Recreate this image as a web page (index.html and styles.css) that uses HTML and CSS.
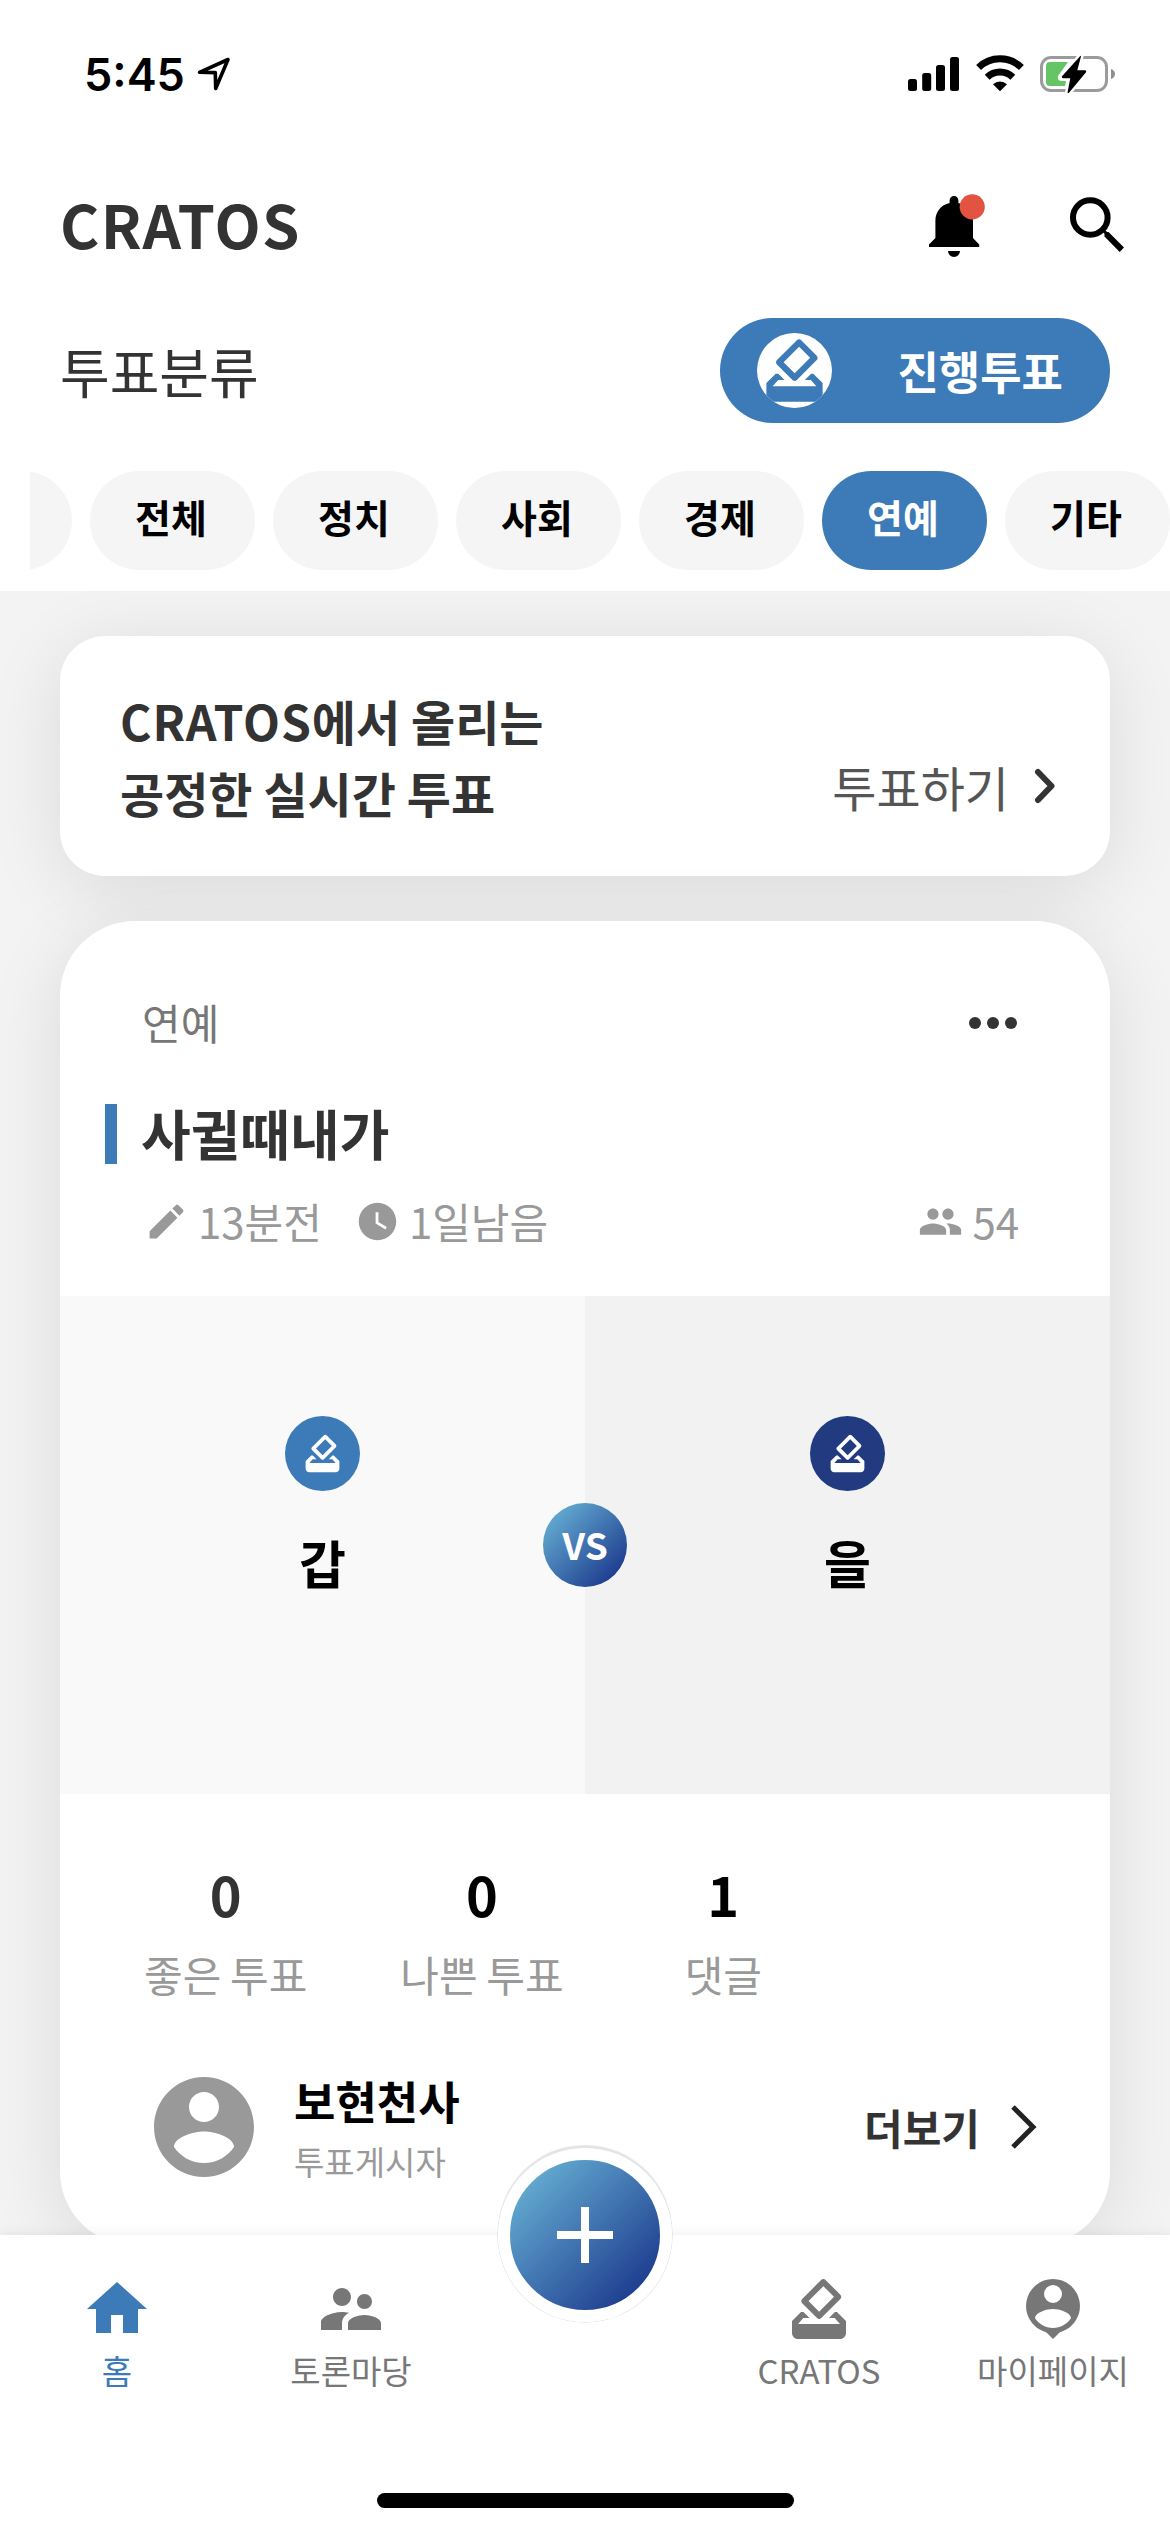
FILE: index.html
```html
<!DOCTYPE html>
<html lang="ko">
<head>
<meta charset="utf-8">
<title>CRATOS</title>
<link rel="stylesheet" href="styles.css">
</head>
<body>
<svg class="defs" width="0" height="0" aria-hidden="true">
  <symbol id="vote" viewBox="0 0 24 24"><path d="M18 13h-.68l-2 2h1.91L19 17H5l1.78-2h2.05l-2-2H6l-3 3v4c0 1.1.89 2 1.99 2H19c1.1 0 2-.89 2-2v-4l-3-3zm-1-5.05l-4.95 4.95-3.54-3.54 4.95-4.95L17 7.95zm-4.24-5.66L6.39 8.66c-.39.39-.39 1.02 0 1.41l4.95 4.95c.39.39 1.02.39 1.41 0l6.36-6.36c.39-.39.39-1.02 0-1.41L14.16 2.3c-.38-.4-1.01-.4-1.4-.01z"/></symbol>
</svg>
<div class="app">
  <header class="top">
    <div class="status">
      <div class="status-left">
        <span class="time">5:45</span>
        <svg width="34" height="34" viewBox="0 0 34 34"><path d="M2.5 15.3 31 2.5 18.7 31.5 18.3 15.6Z" fill="none" stroke="#000" stroke-width="3.6" stroke-linejoin="round"/></svg>
      </div>
      <div class="status-right">
        <svg width="52" height="37" viewBox="0 0 52 37"><rect x="0" y="24" width="9" height="12" rx="2.5"/><rect x="14.2" y="18" width="9" height="18" rx="2.5"/><rect x="28" y="10" width="9" height="26" rx="2.5"/><rect x="42" y="2" width="9" height="34" rx="2.5"/></svg>
        <svg width="48" height="37" viewBox="0 0 48 37"><path d="M2.6 12.6A30.5 30.5 0 0 1 45.4 12.6M11.2 22.2A18.4 18.4 0 0 1 36.8 22.2" fill="none" stroke="#000" stroke-width="7"/><path d="M24 36.3 17 29.3a10.2 10.2 0 0 1 14 0Z"/></svg>
        <svg width="76" height="38" viewBox="0 0 76 38"><rect x="1.5" y="2.5" width="65" height="33" rx="9.5" fill="none" stroke="#9b9b9b" stroke-width="3"/><path d="M71 14c2.600.8 4 2.700 4 5s-1.400 4.200-4 5Z" fill="#8f8f8f"/><path d="M10 7H28L18 21q-1 5 4 5h4L25 31H10q-4 0-4-4V11q0-4 4-4Z" fill="#65c466"/><path d="M40.500.8 22 21.300q-.5 1.700 1 1.900h7.300L27.500 37.500q.8 1 1.700 0L46 17.200q.6-1.700-1-1.900H37.300L41 1.500q-.2-.8-.5-.7Z" stroke="#fff" stroke-width="5" paint-order="stroke"/></svg>
      </div>
    </div>
    <div class="header">
      <h1>CRATOS</h1>
      <div class="header-icons">
        <svg width="56" height="65" viewBox="0 0 56 65"><path d="M25 2a4.400 4.400 0 0 1 4.400 4.400V9C38 11 44 17.500 44 27V44l6.200 6.600V53H0v-2.400L6.400 44V27C6.400 17.500 12 11 20.600 9V6.400A4.400 4.400 0 0 1 25 2ZM19 57H31a6 6 0 0 1-12 0Z"/><circle cx="43.200" cy="12.800" r="12.600" fill="#e25341"/></svg>
        <svg class="search" width="54" height="55" viewBox="0 0 54 55"><circle cx="20.300" cy="20.500" r="17.300" fill="none" stroke="#000" stroke-width="6"/><path d="M34.500 35h4L54 50.600 49.700 55 34.500 39.500Z"/><path d="M32 32 37 37" stroke="#000" stroke-width="3"/></svg>
      </div>
    </div>
    <div class="filter">
      <h2>투표분류</h2>
      <button class="ongoing"><span class="ongoing-badge"><svg width="75" height="75"><use href="#vote"/></svg></span><span>진행투표</span></button>
    </div>
    <nav class="chips">
      <span class="chip"></span><span class="chip">전체</span><span class="chip">정치</span><span class="chip">사회</span><span class="chip">경제</span><span class="chip active">연예</span><span class="chip">기타</span>
    </nav>
  </header>

  <main class="feed">
    <section class="banner">
      <p><span class="brand">CRATOS</span>에서 올리는<br>공정한 실시간 투표</p>
      <a class="banner-link">투표하기<svg width="22" height="36" viewBox="0 0 22 36"><path d="M4 4 17.500 18 4 32" fill="none" stroke="#333" stroke-width="6" stroke-linecap="round" stroke-linejoin="round"/></svg></a>
    </section>

    <article class="card">
      <div class="category"><span>연예</span><svg width="48" height="12" viewBox="0 0 48 12"><circle cx="6" cy="6" r="6"/><circle cx="24" cy="6" r="6"/><circle cx="42" cy="6" r="6"/></svg></div>
      <h3>사귈때내가</h3>
      <div class="meta">
        <span class="meta-item"><svg viewBox="0 0 24 24"><path d="M3 17.250V21h3.750L17.810 9.940l-3.750-3.750L3 17.250zM20.710 7.040c.39-.39.39-1.020 0-1.410l-2.340-2.340c-.39-.39-1.020-.39-1.410 0l-1.830 1.830 3.750 3.750 1.830-1.830z"/></svg>13분전</span>
        <span class="meta-item"><svg viewBox="0 0 24 24"><path d="M12 2C6.500 2 2 6.500 2 12s4.500 10 10 10 10-4.500 10-10S17.500 2 12 2zm4.200 14.200L11 13V7h1.500v5.200l4.500 2.700-.8 1.300z"/></svg>1일남음</span>
        <span class="meta-item voters"><svg viewBox="0 0 24 24"><path d="M16 11c1.660 0 2.990-1.340 2.990-3S17.660 5 16 5c-1.660 0-3 1.340-3 3s1.340 3 3 3zm-8 0c1.660 0 2.990-1.340 2.990-3S9.660 5 8 5C6.340 5 5 6.340 5 8s1.340 3 3 3zm0 2c-2.330 0-7 1.170-7 3.500V19h14v-2.500c0-2.330-4.670-3.500-7-3.500zm8 0c-.29 0-.62.02-.97.05 1.160.84 1.970 1.970 1.970 3.450V19h6v-2.500c0-2.330-4.670-3.500-7-3.500z"/></svg>54</span>
      </div>
      <div class="versus">
        <div class="side side-a"><span class="side-icon"><svg width="45" height="45"><use href="#vote"/></svg></span><b>갑</b></div>
        <div class="side side-b"><span class="side-icon"><svg width="45" height="45"><use href="#vote"/></svg></span><b>을</b></div>
        <span class="vs">VS</span>
      </div>
      <div class="stats">
        <div class="stat first"><b>0</b><span>좋은 투표</span></div>
        <div class="stat"><b>0</b><span>나쁜 투표</span></div>
        <div class="stat comments"><b>1</b><span>댓글</span></div>
      </div>
      <div class="author">
        <svg width="120" height="120" viewBox="0 0 24 24" fill="#999"><path d="M12 2C6.480 2 2 6.480 2 12s4.480 10 10 10 10-4.480 10-10S17.520 2 12 2zm0 3c1.660 0 3 1.340 3 3s-1.340 3-3 3-3-1.340-3-3 1.340-3 3-3zm0 14.200c-2.500 0-4.710-1.280-6-3.220.03-1.990 4-3.080 6-3.080 1.990 0 5.970 1.090 6 3.080-1.290 1.940-3.500 3.220-6 3.220z"/></svg>
        <div class="author-text"><b>보현천사</b><span>투표게시자</span></div>
        <a class="more">더보기<svg width="27" height="46" viewBox="0 0 27 46"><path d="M3 3 23 23 3 43" fill="none" stroke="#222" stroke-width="5"/></svg></a>
      </div>
    </article>
  </main>

  <nav class="tabs">
    <a class="tab active"><svg viewBox="0 0 24 24"><path d="M10 20v-6h4v6h5v-8h3L12 3 2 12h3v8z"/></svg>홈</a>
    <a class="tab"><svg viewBox="0 0 24 24"><path d="M16.500 12c1.380 0 2.490-1.120 2.490-2.500S17.880 7 16.500 7C15.120 7 14 8.120 14 9.500s1.120 2.500 2.500 2.500zM9 11c1.660 0 2.990-1.340 2.990-3S10.660 5 9 5C7.340 5 6 6.340 6 8s1.340 3 3 3zm7.500 3c-1.830 0-5.500.92-5.500 2.750V19h11v-2.250c0-1.830-3.670-2.750-5.500-2.750zM9 13c-2.330 0-7 1.170-7 3.500V19h7v-2.250c0-.85.33-2.340 2.370-3.470C10.500 13.100 9.660 13 9 13z"/></svg>토론마당</a>
    <span class="tab"></span>
    <a class="tab"><svg><use href="#vote"/></svg>CRATOS</a>
    <a class="tab"><svg viewBox="0 0 24 24"><path fill-rule="evenodd" d="M12 2a9 9 0 0 1 3.200 17.400q-.8.200-1.200.6L12 22 10 20q-.4-.4-1.200-.6A9 9 0 0 1 12 2zm0 2a3 3 0 1 0 0 6 3 3 0 0 0 0-6zm0 14.300c2.500 0 4.710-1.280 6-3.220-.03-1.990-4-3.080-6-3.080s-5.970 1.090-6 3.080c1.290 1.940 3.500 3.220 6 3.220z"/></svg>마이페이지</a>
    <button class="add"><svg width="96" height="96" viewBox="0 0 24 24" fill="#fff"><path d="M19 13h-6v6h-2v-6H5v-2h6V5h2v6h6v2z"/></svg></button>
    <span class="home-indicator"></span>
  </nav>
</div>
</body>
</html>
```
FILE: styles.css
```css
* { box-sizing: border-box; margin: 0; padding: 0; }
body {
  width: 1170px;
  height: 2532px;
  overflow: hidden;
  background: #fff;
  color: #333;
  font-family: "Noto Sans CJK KR", "Noto Sans", sans-serif;
}
svg { display: block; flex: none; }
button { border: 0; font: inherit; }
.defs { position: absolute; }
.app { display: flex; flex-direction: column; height: 2532px; }

/* Top area */
.top { position: relative; z-index: 1; flex: none; height: 591px; background: #fff; }
.status {
  display: flex;
  justify-content: space-between;
  height: 132px;
  padding: 55px 54px 0 84px;
}
.status-left { display: flex; gap: 11px; }
.status-left svg { margin-top: 2px; }
.time { width: 102px; font: 600 45px/40px Inter, sans-serif; color: #000; white-space: nowrap; }
.status-right { display: flex; gap: 16px; }
.header {
  display: flex;
  justify-content: space-between;
  height: 180px;
  padding: 0 46px 0 60px;
}
.header h1 { font-size: 60px; line-height: 182px; font-weight: 700; letter-spacing: 1.3px; }
.header-icons { display: flex; align-items: flex-start; gap: 85px; padding-top: 62px; }
.search { margin-top: 3px; }
.filter {
  display: flex;
  justify-content: space-between;
  align-items: center;
  height: 105px;
  margin: 6px 60px 48px;
}
.filter h2 { font-size: 54px; font-weight: 400; line-height: 105px; }
.ongoing {
  display: flex;
  align-items: center;
  justify-content: space-between;
  width: 390px;
  height: 105px;
  padding: 0 47px 0 37px;
  border-radius: 53px;
  background: #3c7ab8;
  color: #fff;
  font-size: 45px;
  font-weight: 700;
}
.ongoing-badge { width: 75px; height: 75px; border-radius: 50%; background: #fff; overflow: hidden; }
.ongoing-badge svg { fill: #3c7ab8; }
.chips { display: flex; justify-content: flex-end; gap: 18px; margin-left: 30px; overflow: hidden; }
.chip {
  flex: none;
  width: 165px;
  height: 99px;
  padding-right: 3px;
  border-radius: 50px;
  background: #f5f5f5;
  color: #000;
  font-size: 39px;
  font-weight: 700;
  line-height: 91px;
  text-align: center;
}
.chip.active { background: #3c7ab8; color: #fff; }

/* Feed */
.feed { flex: none; height: 1644px; padding: 45px 60px 0; background: #f3f3f3; overflow: hidden; }
.banner {
  display: flex;
  justify-content: space-between;
  align-items: flex-end;
  height: 240px;
  padding: 0 54px 48px 60px;
  border-radius: 45px;
  background: #fff;
  box-shadow: 0 12px 75px rgba(0, 0, 0, 0.1);
}
.banner p { font-size: 48px; line-height: 72px; font-weight: 700; word-spacing: -2.5px; }
.brand { letter-spacing: 0.9px; }
.banner-link { display: flex; align-items: center; gap: 25px; margin-bottom: 6px; color: #555; font-size: 48px; line-height: 72px; }
.card {
  height: 1325px;
  margin-top: 45px;
  padding-top: 72px;
  border-radius: 75px;
  background: #fff;
  box-shadow: 0 12px 75px rgba(0, 0, 0, 0.1);
}
.category {
  display: flex;
  justify-content: space-between;
  align-items: center;
  height: 57px;
  padding: 0 93px 0 82px;
  color: #777;
  font-size: 42px;
}
.category svg { margin-top: 3px; fill: #333; }
.card h3 {
  height: 60px;
  margin: 54px 0 30px 45px;
  padding-left: 24px;
  border-left: 12px solid #3c7ab8;
  font-size: 54px;
  line-height: 57px;
}
.meta { display: flex; gap: 33px; height: 54px; padding: 0 91px 0 84px; color: #999; font-size: 42px; line-height: 54px; }
.meta-item { display: flex; align-items: center; gap: 9px; }
.meta-item svg { width: 45px; height: 45px; fill: #999; }
.voters { margin-left: auto; }
.versus { position: relative; display: flex; height: 498px; margin-top: 48px; }
.side { display: flex; flex: 1; flex-direction: column; align-items: center; gap: 41px; padding-top: 120px; color: #000; font-size: 51px; line-height: 60px; }
.side-a { background: #f9f9f9; }
.side-b { background: #f2f2f2; }
.side-icon { display: grid; place-items: center; width: 75px; height: 75px; border-radius: 50%; background: #3c7ab8; }
.side-b .side-icon { background: #213a80; }
.side-icon svg { fill: #fff; }
.vs {
  position: absolute;
  left: 483px;
  top: 207px;
  width: 84px;
  height: 84px;
  border-radius: 50%;
  background: linear-gradient(135deg, #6ebcdb, #122a84);
  color: #fff;
  font-size: 37px;
  font-weight: 700;
  line-height: 82px;
  text-align: center;
}
.stats { display: flex; gap: 93px; padding: 70px 0 0 84px; text-align: center; }
.stat { display: flex; flex-direction: column; gap: 23px; color: #000; }
.stat.first { color: #333; }
.stat.comments { margin-left: 28px; }
.stat b { font-size: 54px; line-height: 60px; }
.stat span { color: #999; font-size: 42px; line-height: 54px; word-spacing: -3px; }
.author { display: flex; align-items: center; height: 120px; margin-top: 66px; padding: 0 73px 0 84px; }
.author-text { display: flex; flex-direction: column; gap: 11px; margin: 3px 0 0 30px; }
.author-text b { color: #000; font-size: 45px; line-height: 54px; }
.author-text span { color: #999; font-size: 33px; line-height: 44px; }
.more { display: flex; align-items: center; gap: 30px; margin-left: auto; font-size: 42px; font-weight: 700; line-height: 60px; }

/* Bottom tabs */
.tabs {
  position: relative;
  z-index: 1;
  display: flex;
  flex: none;
  height: 297px;
  background: #fff;
  box-shadow: 0 -3px 9px rgba(0, 0, 0, 0.05);
}
.tab { display: flex; flex: 1; flex-direction: column; align-items: center; gap: 5px; padding-top: 38px; color: #777; font-size: 33px; line-height: 40px; }
.tab svg { width: 72px; height: 72px; fill: #777; }
.tab.active { color: #3c7ab8; }
.tab.active svg { fill: #3c7ab8; }
.add {
  position: absolute;
  left: 498px;
  top: -87px;
  display: grid;
  place-items: center;
  width: 174px;
  height: 174px;
  border: 12px solid #fff;
  border-radius: 50%;
  background: linear-gradient(135deg, #6ebcdb, #122a84);
  box-shadow: 0 -3px 1px #e4e4e4, 0 0 0 0.5px #c5d4e6;
}
.home-indicator { position: absolute; left: 377px; top: 258px; width: 417px; height: 15px; border-radius: 8px; background: #000; }
```
